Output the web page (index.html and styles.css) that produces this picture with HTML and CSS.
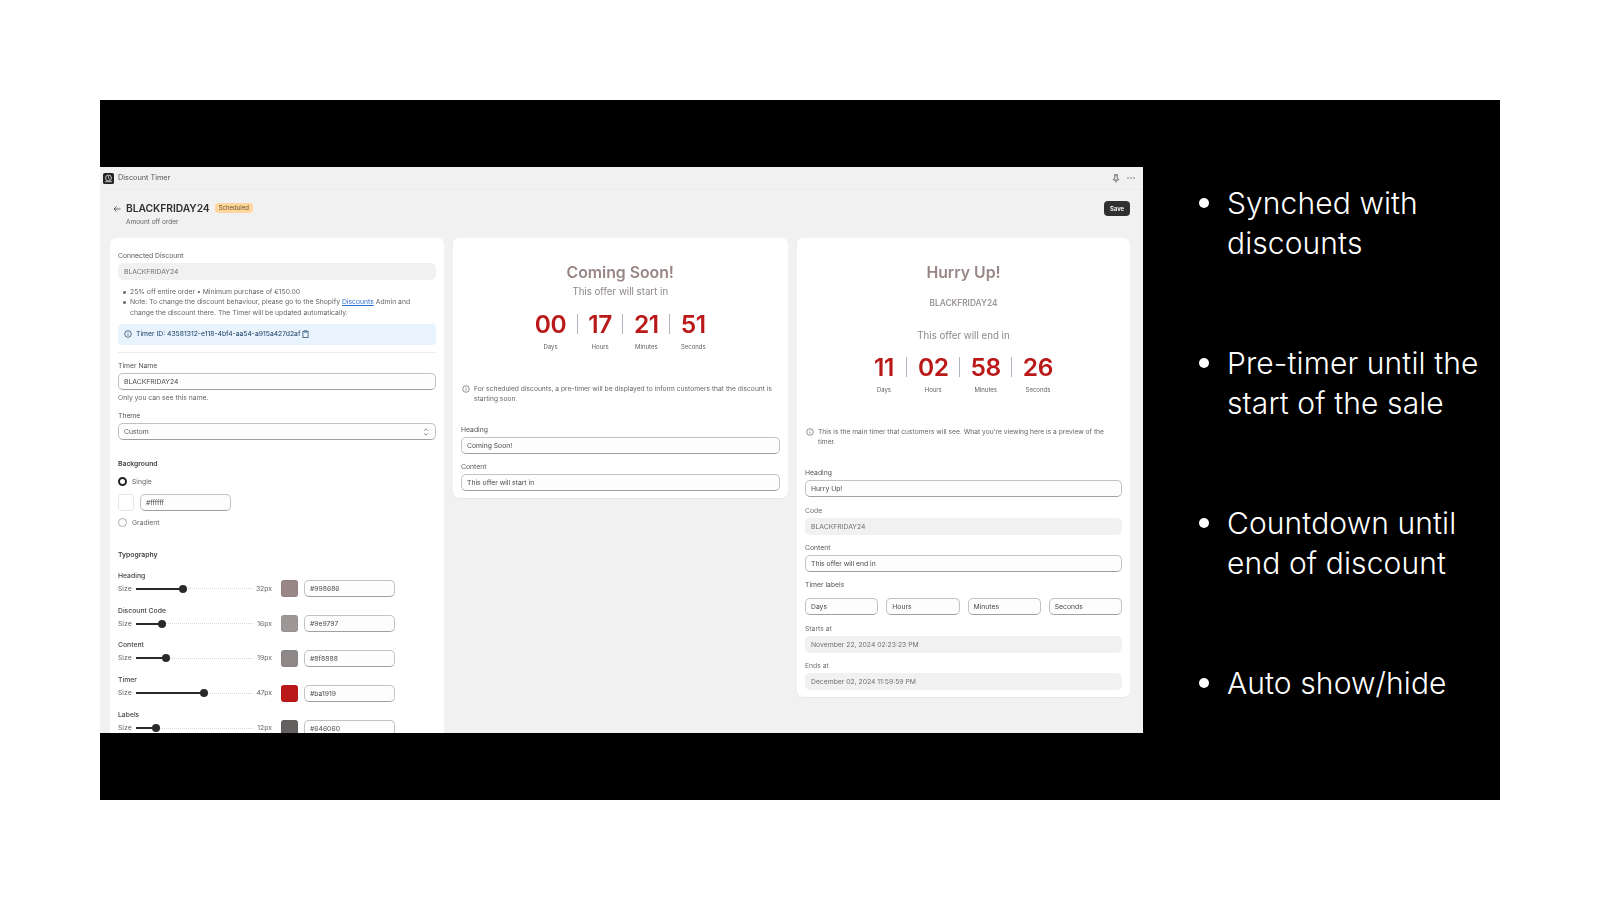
FILE: index.html
```html
<!DOCTYPE html>
<html lang="en">
<head>
<meta charset="utf-8">
<title>Discount Timer</title>
<link rel="stylesheet" href="styles.css">
</head>
<body>
<main class="slide">
  <section class="app">
    <header class="topbar">
      <svg class="app-icon" viewBox="0 0 12 12"><rect width="12" height="12" rx="2" fill="#222"/><circle cx="6" cy="5.5" r="3.2" fill="none" stroke="#ddd" stroke-width="1"/><path d="M6 3.5V5.8L7.5 6.8M2 9.5h8" stroke="#ddd" stroke-width=".9" fill="none"/></svg>
      <span class="app-name">Discount Timer</span>
      <span class="spacer"></span>
      <svg class="pin" viewBox="0 0 8 9"><path d="M2.3.8h3.4M2.8.8v3L1.5 5.4v.6h5v-.6L5.2 3.8v-3M4 6v2.6" fill="none" stroke="#555" stroke-width=".9"/></svg>
      <svg class="dots" viewBox="0 0 8 2"><circle cx="1" cy="1" r=".7" fill="#555"/><circle cx="4" cy="1" r=".7" fill="#555"/><circle cx="7" cy="1" r=".7" fill="#555"/></svg>
    </header>
    <div class="page-head">
      <svg class="back" viewBox="0 0 8 8"><path d="M7.5 4H1M3.6 1.4 1 4l2.6 2.6" fill="none" stroke="#444" stroke-width=".8"/></svg>
      <div class="titles">
        <div class="title-row"><h1>BLACKFRIDAY24</h1><span class="badge">Scheduled</span></div>
        <div class="subtitle">Amount off order</div>
      </div>
      <span class="spacer"></span>
      <button class="save">Save</button>
    </div>
    <div class="columns">
      <div class="card card-settings">
        <div class="label">Connected Discount</div>
        <div class="field readonly">BLACKFRIDAY24</div>
        <ul class="notes">
          <li>25% off entire order • Minimum purchase of €150.00</li>
          <li>Note: To change the discount behaviour, please go to the Shopify <a href="#">Discounts</a> Admin and change the discount there. The Timer will be updated automatically.</li>
        </ul>
        <div class="timer-id">
          <svg class="icon-info" viewBox="0 0 8 8"><circle cx="4" cy="4" r="3.3" fill="none" stroke="#12395f" stroke-width=".7"/><path d="M4 3.6v2M4 2.2v.7" stroke="#12395f" stroke-width=".7"/></svg>
          <span>Timer ID: 43581312-e118-4bf4-aa54-a915a427d2af</span>
          <svg class="icon-clip" viewBox="0 0 8 9"><path d="M2.4 1.5H1v7h6v-7H5.600M2.600.7h2.800v1.700H2.600z" fill="none" stroke="#12395f" stroke-width=".8"/></svg>
        </div>
        <hr class="divider">
        <div class="label label-after-rule">Timer Name</div>
        <div class="field input">BLACKFRIDAY24</div>
        <div class="help">Only you can see this name.</div>
        <div class="label label-theme">Theme</div>
        <div class="field input select">Custom
          <svg class="chev" viewBox="0 0 6 10"><path d="M1.200 3.600 3 1.800l1.800 1.800M1.200 6.400 3 8.200l1.800-1.800" fill="none" stroke="#666" stroke-width=".8"/></svg>
        </div>
        <div class="section-title section-bg">Background</div>
        <div class="radio-row radio-single"><span class="radio on"></span>Single</div>
        <div class="color-row">
          <span class="swatch-blank"></span>
          <div class="field input hex-wide">#ffffff</div>
        </div>
        <div class="radio-row radio-gradient"><span class="radio"></span>Gradient</div>
        <div class="section-title section-type">Typography</div>

        <div class="type-label first">Heading</div>
        <div class="type-row"><span class="size">Size</span><span class="slider"><span class="fill" style="width:40%"></span></span><span class="val">32px</span><span class="swatch" style="background:#998686"></span><div class="field input hex">#998686</div></div>
        <div class="type-label">Discount Code</div>
        <div class="type-row"><span class="size">Size</span><span class="slider"><span class="fill" style="width:22%"></span></span><span class="val">16px</span><span class="swatch" style="background:#9e9797"></span><div class="field input hex">#9e9797</div></div>
        <div class="type-label">Content</div>
        <div class="type-row"><span class="size">Size</span><span class="slider"><span class="fill" style="width:26%"></span></span><span class="val">19px</span><span class="swatch" style="background:#8f8888"></span><div class="field input hex">#8f8888</div></div>
        <div class="type-label">Timer</div>
        <div class="type-row"><span class="size">Size</span><span class="slider"><span class="fill" style="width:58%"></span></span><span class="val">47px</span><span class="swatch" style="background:#ba1919"></span><div class="field input hex">#ba1919</div></div>
        <div class="type-label">Labels</div>
        <div class="type-row"><span class="size">Size</span><span class="slider"><span class="fill" style="width:17%"></span></span><span class="val">12px</span><span class="swatch" style="background:#646060"></span><div class="field input hex">#646060</div></div>
      </div>

      <div class="card">
        <h2 class="preview-heading">Coming Soon!</h2>
        <div class="preview-content content-tight">This offer will start in</div>
        <div class="countdown">
          <div class="unit"><span class="digits">00</span><span class="unit-label"><span>Days</span></span></div><i class="sep"></i>
          <div class="unit"><span class="digits">17</span><span class="unit-label"><span>Hours</span></span></div><i class="sep"></i>
          <div class="unit"><span class="digits">21</span><span class="unit-label"><span>Minutes</span></span></div><i class="sep"></i>
          <div class="unit"><span class="digits">51</span><span class="unit-label"><span>Seconds</span></span></div>
        </div>
        <div class="info">
          <svg class="icon-info grey" viewBox="0 0 8 8"><circle cx="4" cy="4" r="3.300" fill="none" stroke="#666" stroke-width=".7"/><path d="M4 3.600v2M4 2.200v.7" stroke="#666" stroke-width=".7"/></svg>
          <p>For scheduled discounts, a pre-timer will be displayed to inform customers that the discount is starting soon.</p>
        </div>
        <div class="label label-first">Heading</div>
        <div class="field input">Coming Soon!</div>
        <div class="label label-next">Content</div>
        <div class="field input">This offer will start in</div>
      </div>

      <div class="card card-main">
        <h2 class="preview-heading">Hurry Up!</h2>
        <div class="preview-code">BLACKFRIDAY24</div>
        <div class="preview-content content-loose">This offer will end in</div>
        <div class="countdown countdown-main">
          <div class="unit"><span class="digits">11</span><span class="unit-label"><span>Days</span></span></div><i class="sep"></i>
          <div class="unit"><span class="digits">02</span><span class="unit-label"><span>Hours</span></span></div><i class="sep"></i>
          <div class="unit"><span class="digits">58</span><span class="unit-label"><span>Minutes</span></span></div><i class="sep"></i>
          <div class="unit"><span class="digits">26</span><span class="unit-label"><span>Seconds</span></span></div>
        </div>
        <div class="info">
          <svg class="icon-info grey" viewBox="0 0 8 8"><circle cx="4" cy="4" r="3.300" fill="none" stroke="#666" stroke-width=".7"/><path d="M4 3.600v2M4 2.200v.7" stroke="#666" stroke-width=".7"/></svg>
          <p>This is the main timer that customers will see. What you're viewing here is a preview of the timer.</p>
        </div>
        <div class="label label-first">Heading</div>
        <div class="field input">Hurry Up!</div>
        <div class="label label-next label-code muted">Code</div>
        <div class="field readonly">BLACKFRIDAY24</div>
        <div class="label label-next label-content">Content</div>
        <div class="field input">This offer will end in</div>
        <div class="label label-next label-gap">Timer labels</div>
        <div class="label-grid">
          <div class="field input">Days</div>
          <div class="field input">Hours</div>
          <div class="field input">Minutes</div>
          <div class="field input">Seconds</div>
        </div>
        <div class="label label-next label-after-grid muted">Starts at</div>
        <div class="field readonly">November 22, 2024 02:23:23 PM</div>
        <div class="label label-next muted">Ends at</div>
        <div class="field readonly">December 02, 2024 11:59:59 PM</div>
      </div>
    </div>
  </section>
  <ul class="features">
    <li>Synched with discounts</li>
    <li>Pre-timer until the start of the sale</li>
    <li>Countdown until end of discount</li>
    <li>Auto show/hide</li>
  </ul>
</main>
</body>
</html>
```

FILE: styles.css
```css
* { box-sizing: border-box; }
html, body { margin: 0; height: 100%; background: #fff; overflow: hidden; }
body { padding: 100px; font-family: Inter, "Liberation Sans", sans-serif; }

.slide {
  width: 1400px;
  height: 700px;
  background: #000;
  padding-top: 67px;
  display: flex;
  align-items: flex-start;
}

.app {
  width: 1043px;
  height: 566px;
  flex: none;
  overflow: hidden;
  background: #f1f1f1;
  color: #4a4a4a;
  font-size: 6.8px;
  line-height: 10px;
  filter: blur(.4px);
}

.spacer { flex: 1; }

.topbar {
  height: 23px;
  display: flex;
  align-items: center;
  padding: 0 8px 0 3px;
  border-bottom: 1px solid #ebebeb;
}
.app-icon { width: 11px; height: 11px; margin-right: 4px; }
.app-name { font-size: 7.3px; color: #555; }
.pin { width: 8px; height: 9px; margin-right: 7px; }
.dots { width: 8px; height: 2px; }

.page-head {
  height: 48px;
  display: flex;
  padding: 11px 13px 0 13px;
}
.back { width: 8px; height: 8px; margin: 4px 5px 0 0; }
.title-row { display: flex; align-items: center; height: 14px; }
h1 { margin: 0; font-size: 10.3px; font-weight: 600; color: #303030; letter-spacing: -.05px; }
.badge {
  margin-left: 5px;
  height: 10px;
  padding: 0 4px;
  line-height: 10px;
  font-size: 6px;
  border-radius: 4px;
  background: #ffd79d;
  color: #6b5225;
}
.subtitle { margin-top: 2px; font-size: 6.5px; line-height: 10px; color: #666; }
.save {
  width: 26px;
  height: 15px;
  margin-top: 0;
  border: 0;
  padding: 0;
  border-radius: 4px;
  background: #303030;
  color: #fff;
  font: 600 6px Inter, "Liberation Sans", sans-serif;
}

.columns {
  padding: 0 13px 0 10px;
  display: grid;
  grid-template-columns: 333.5px 334.5px 333px;
  gap: 9.5px;
  align-items: start;
}
.card {
  background: #fff;
  border-radius: 6px;
  padding: 25px 8px 7.500px;
  box-shadow: 0 1px 0 #e6e6e6;
}
.card-settings { padding-top: 13px; }
.card-main { padding-bottom: 7px; }

.label { height: 10px; line-height: 10px; margin-bottom: 2px; color: #555; }
.label-first { margin-top: 20px; }
.label-next { margin-top: 8px; }
.label-code { margin-top: 9px; }
.label-content { margin-top: 8.500px; }
.label-gap { margin-bottom: 8px; }
.label-after-grid { margin-top: 9px; }
.muted { color: #6f6f6f; }

.field {
  height: 17px;
  line-height: 15px;
  padding: 0 5px;
  border-radius: 5px;
  white-space: nowrap;
}
.readonly { line-height: 17px; padding: 0 6px; background: #f1f1f1; color: #707070; }
.input {
  background: #fdfdfd;
  color: #4a4a4a;
  border: 1px solid #c2c2c2;
  border-bottom-color: #a0a0a0;
}

.notes {
  margin: 7px 0 0;
  padding: 0 0 0 12px;
  line-height: 10.3px;
  color: #666;
  list-style: none;
}
.notes li { position: relative; }
.notes li::before {
  content: "";
  position: absolute;
  left: -7px;
  top: 4px;
  width: 2.500px;
  height: 2.500px;
  border-radius: 50%;
  background: #777;
}
.notes a { color: #2c6ecb; text-decoration: underline; }

.timer-id {
  margin-top: 6px;
  height: 21px;
  display: flex;
  align-items: center;
  padding: 0 6px;
  border-radius: 4px;
  background: #e8f3fd;
  color: #12395f;
}
.icon-info { width: 8px; height: 8px; margin-right: 4px; flex: none; }
.icon-clip { width: 7px; height: 8px; margin-left: 2px; }

.divider { margin: 7px 0 0; height: 1px; border: 0; background: #ececec; }
.label-after-rule { margin-top: 8px; }
.help { margin-top: 3px; height: 10px; color: #666; }
.label-theme { margin-top: 8.500px; margin-bottom: 1.500px; }
.select { position: relative; color: #555; }
.chev { position: absolute; right: 6px; top: 3px; width: 6px; height: 10px; }

.section-title { height: 10px; font-weight: 600; color: #404040; }
.section-bg { margin-top: 19.500px; }
.section-type { margin-top: 22px; }
.radio-row { height: 10px; display: flex; align-items: center; gap: 5px; color: #666; }
.radio-single { margin-top: 7.500px; }
.radio-gradient { margin-top: 7px; }
.radio { width: 9px; height: 9px; border-radius: 50%; border: 1px solid #aaa; background: #fff; }
.radio.on { border: 2.600px solid #222; }

.color-row { margin-top: 7px; display: flex; gap: 6px; }
.swatch-blank { width: 16px; height: 17px; border: 1px solid #e8e8e8; border-radius: 3px; }
.hex-wide { width: 91px; }

.type-label { height: 10px; margin-top: 8.300px; font-weight: 500; color: #454545; }
.type-label.first { margin-top: 11px; }
.type-row { height: 17px; margin-top: -.5px; display: flex; align-items: center; color: #666; }
.size { width: 18px; }
.slider {
  position: relative;
  width: 117px;
  height: 1px;
  border-top: 1px dotted #d6d6d6;
}
.fill {
  position: absolute;
  left: 0;
  top: -1.500px;
  height: 2px;
  background: #2a2a2a;
}
.fill::after {
  content: "";
  position: absolute;
  right: -4px;
  top: -3px;
  width: 8px;
  height: 8px;
  border-radius: 50%;
  background: #2a2a2a;
}
.val { width: 19px; text-align: right; }
.swatch { width: 17px; height: 17px; margin: 0 6px 0 9px; border-radius: 3px; box-shadow: inset 0 0 0 1px rgba(0,0,0,.04); }
.hex { width: 91px; }

.preview-heading {
  margin: 0;
  height: 20px;
  line-height: 20px;
  text-align: center;
  font-size: 15.800px;
  font-weight: 600;
  color: #998686;
}
.preview-content { height: 12px; line-height: 12px; text-align: center; font-size: 9.700px; color: #8f8888; }
.content-tight { margin-top: 3px; }
.content-loose { margin-top: 22px; }
.preview-code { margin-top: 15px; height: 10px; line-height: 10px; text-align: center; font-size: 8.300px; font-weight: 600; color: #9e9797; }

.countdown { margin-top: 16px; display: flex; justify-content: center; align-items: flex-start; }
.countdown-main { margin-top: 15px; }
.countdown-main .unit:first-child + .sep { margin-left: 12.500px; }
.unit { display: flex; flex-direction: column; align-items: center; }
.digits { height: 20px; line-height: 20px; font-size: 24.500px; font-weight: 600; color: #ba1919; letter-spacing: -.4px; }
.unit-label { width: 0; height: 10px; margin-top: 7.500px; display: flex; justify-content: center; font-size: 6px; white-space: nowrap; color: #646060; }
.sep { width: 1px; height: 20px; margin: 0 10.500px; background: #aeb6c2; }

.info { margin-top: 32px; display: flex; gap: 4px; padding-left: 1px; color: #666; font-size: 6.700px; }
.info .icon-info { margin: 1px 0 0; }
.info p { margin: 0; line-height: 10.500px; }

.label-grid { display: grid; grid-template-columns: repeat(4, 1fr); gap: 8px; }

.features {
  margin: 15.500px 0 0 56px;
  padding: 0;
  list-style: none;
  width: 295px;
  font-family: Inter, sans-serif;
  font-weight: 300;
  font-size: 30px;
  letter-spacing: .1px;
  line-height: 40px;
  color: #fff;
}
.features li {
  display: flex;
  gap: 18px;
  margin-bottom: 80px;
}
.features li::before {
  content: "";
  flex: none;
  width: 10px;
  height: 10px;
  margin-top: 15px;
  border-radius: 50%;
  background: #fff;
}
```
